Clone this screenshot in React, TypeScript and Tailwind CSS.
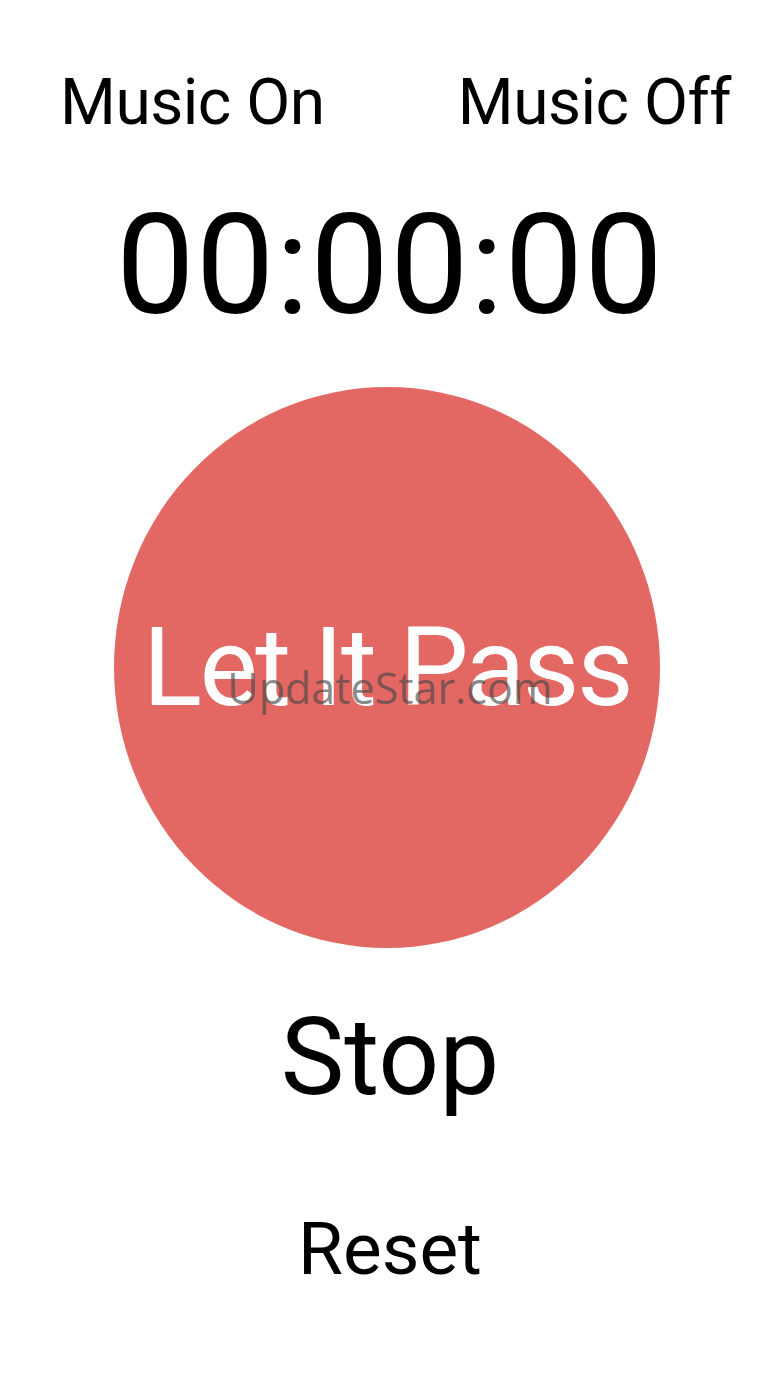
export default function App() {
  const font = { fontFamily: 'Roboto, "Liberation Sans", sans-serif' };
  return (
    <div className="relative w-[780px] h-[1387px] bg-white text-black flex flex-col" style={font}>
      {/* Music toggles */}
      <div className="flex justify-between pl-[60px] pr-[49px] pt-[71px]">
        <button className="text-[64px] leading-none font-normal tracking-[-0.5px]">Music On</button>
        <button className="text-[64px] leading-none font-normal tracking-[-0.5px]">Music Off</button>
      </div>

      {/* Timer */}
      <div className="mt-[60px] text-center text-[140px] leading-none tracking-[1px]">00:00:00</div>

      {/* Main button */}
      <button className="mt-[52px] ml-[114px] w-[546px] h-[561px] rounded-[50%] bg-[#e36863] flex items-center justify-center">
        <span className="text-white text-[110px] leading-none tracking-[-2.5px] whitespace-nowrap">Let It Pass</span>
      </button>

      {/* Controls */}
      <button className="mt-[56px] mx-auto text-[107px] leading-none">Stop</button>
      <button className="mt-[102px] mx-auto text-[73px] leading-none">Reset</button>

      {/* Watermark */}
      <div
        className="absolute left-0 right-0 top-[666px] text-center text-[43px] leading-none text-[rgba(70,70,70,0.65)] pointer-events-none"
        style={{ fontFamily: '"Open Sans", "Liberation Sans", sans-serif' }}
      >
        UpdateStar.com
      </div>
    </div>
  );
}
